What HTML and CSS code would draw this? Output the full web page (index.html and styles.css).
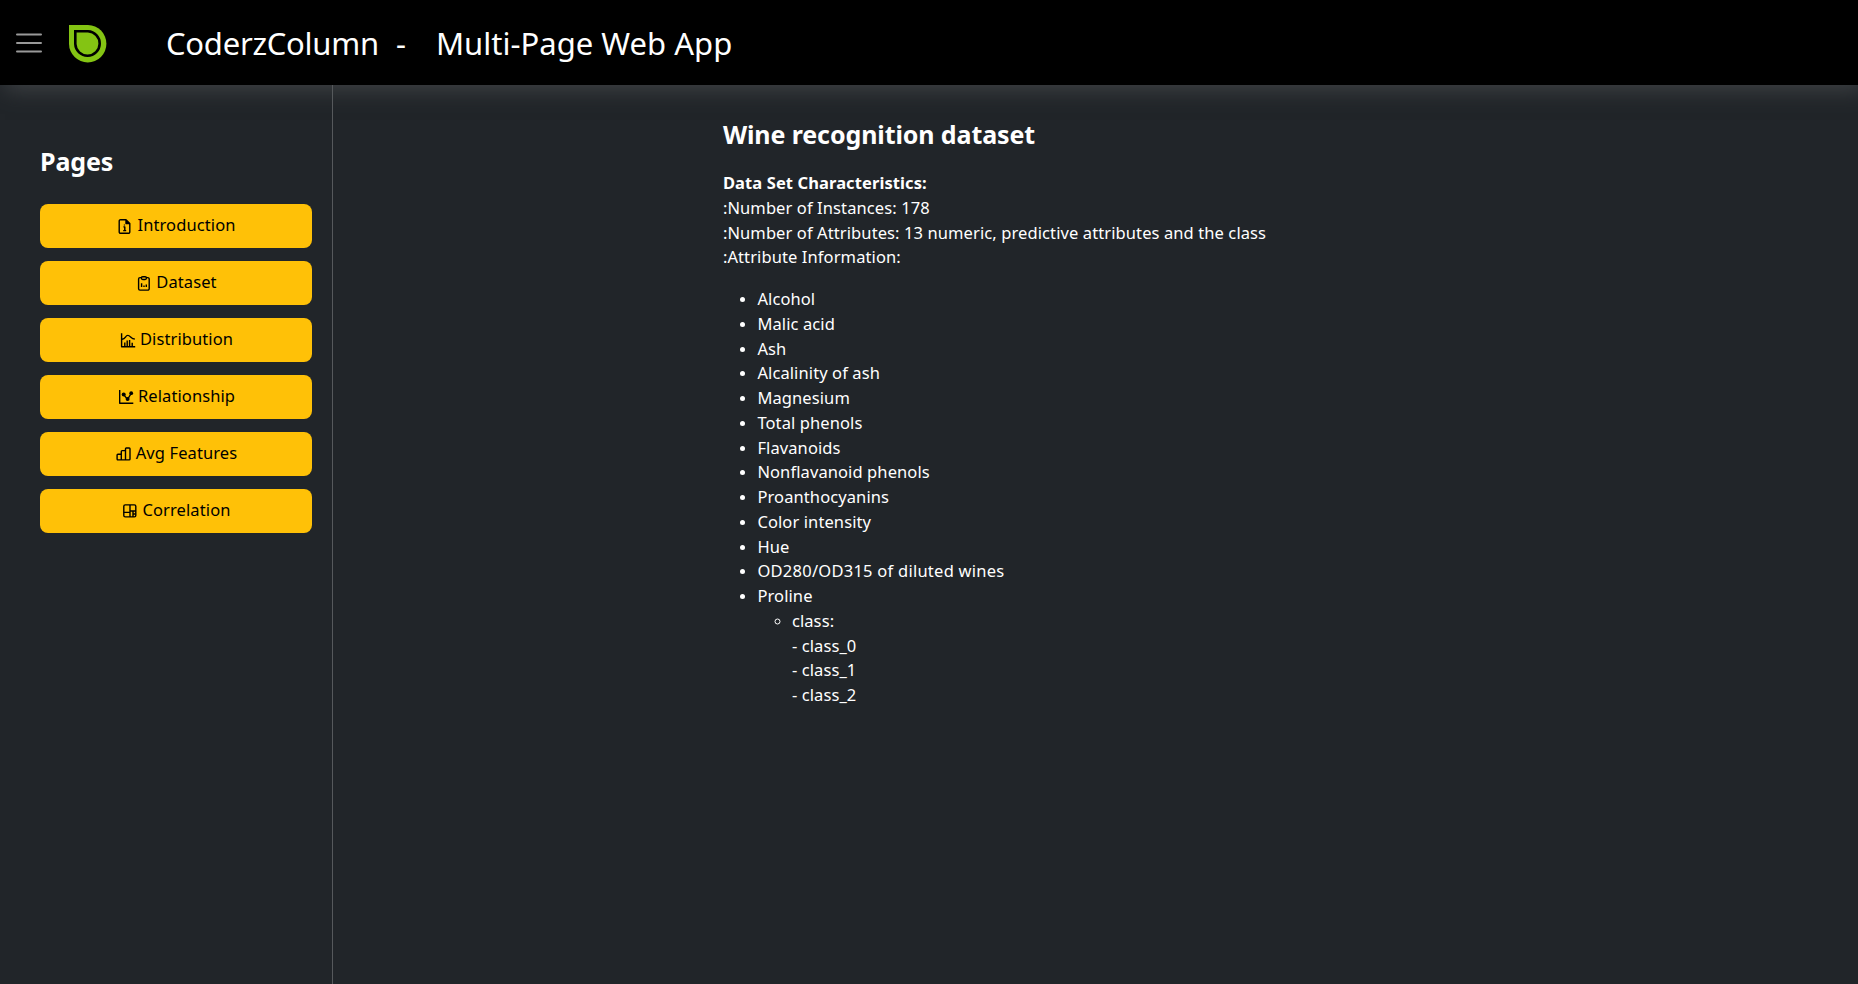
FILE: index.html
```
<!DOCTYPE html>
<html lang="en">
<head>
<meta charset="utf-8">
<title>Multi-Page Web App</title>
<link rel="stylesheet" href="styles.css">
</head>
<body>
<header class="header">
  <svg class="menu" viewBox="0 0 26 20" width="26" height="20"><path d="M1 1.5h24M1 10h24M1 18.5h24"/></svg>
  <svg class="logo" viewBox="0 0 38 38" width="38" height="38">
    <path fill="#84c413" d="M0 0H19A18.7 18.7 0 1 1 0 19Z"/>
    <path fill="#84c413" stroke="#000" stroke-width="2.6" d="M6.3 6.3H19A12.2 12.2 0 1 1 6.3 19Z"/>
  </svg>
  <div class="title"><span class="brand">CoderzColumn</span><span class="dash">-</span><span>Multi-Page Web App</span></div>
</header>
<div class="layout">
  <nav class="sidebar">
    <h2 class="heading">Pages</h2>
    <div class="buttons">
      <button class="btn"><svg class="icon" viewBox="0 0 17 17"><path d="M10 1.7H4.6a1.4 1.4 0 0 0-1.4 1.4v10.8a1.4 1.4 0 0 0 1.4 1.4h7.8a1.4 1.4 0 0 0 1.4-1.4V5.5L10 1.7v3.8h3.8M7.4 8.9h1.4v3.7M7.2 12.6h3"/><path class="solid" d="M10 1.7v3.8h3.8zM7.8 6.4h1.3v1.2H7.8z"/></svg>Introduction</button>
      <button class="btn"><svg class="icon" viewBox="0 0 17 17"><path d="M6.4 2.6H5a1.4 1.4 0 0 0-1.4 1.4v9.7a1.4 1.4 0 0 0 1.4 1.4h7.8a1.4 1.4 0 0 0 1.4-1.4V4a1.4 1.4 0 0 0-1.4-1.4h-1.4M7.7 1.7h2.4a1.2 1.2 0 0 1 0 2.8H7.7a1.2 1.2 0 0 1 0-2.8ZM6.6 8.2V12M9 10.4V12M11.3 9.4V12"/></svg>Dataset</button>
      <button class="btn"><svg class="icon" viewBox="0 0 17 17"><path d="M2.6 1.2v13.6h13.6M3.2 7.2c3.5 0 3-3.8 5.6-3.8S12 7 15.8 7M5.8 10.4v4M8.2 8.6v6M10.6 8v6.4M13.2 10.8v3.6"/></svg>Distribution</button>
      <button class="btn"><svg class="icon" viewBox="0 0 17 17"><path d="M2.7 1v13.2h13.6M6.7 5.6l3.8 4.8 4-6.4"/><circle class="solid" cx="6.7" cy="5.5" r="2"/><circle class="solid" cx="10.6" cy="10" r="2"/><circle class="solid" cx="14.2" cy="4.2" r="1.9"/></svg>Relationship</button>
      <button class="btn"><svg class="icon" viewBox="0 0 17 17"><path d="M2.9 8.2h3.4v5.7H2.9a.8.8 0 0 1-.8-.8V9a.8.8 0 0 1 .8-.8ZM6.3 13.9V5.4a.8.8 0 0 1 .8-.8h3.4v9.3ZM10.5 13.9V2.8a.8.8 0 0 1 .8-.8h2.9a.8.8 0 0 1 .8.8v10.3a.8.8 0 0 1-.8.8Z"/></svg>Avg Features</button>
      <button class="btn"><svg class="icon" viewBox="0 0 17 17"><rect x="2.8" y="1.9" width="12" height="12" rx="1.4"/><path d="M9 1.9v12M2.8 9.4H9M9 8h5.8M12 8v6M12 11h2.8"/></svg>Correlation</button>
    </div>
  </nav>
  <main class="main">
    <article class="content">
      <h2 class="heading">Wine recognition dataset</h2>
      <p class="text"><strong>Data Set Characteristics:</strong><br>:Number of Instances: 178<br>:Number of Attributes: 13 numeric, predictive attributes and the class<br>:Attribute Information:</p>
      <ul class="list">
        <li>Alcohol</li>
        <li>Malic acid</li>
        <li>Ash</li>
        <li>Alcalinity of ash</li>
        <li>Magnesium</li>
        <li>Total phenols</li>
        <li>Flavanoids</li>
        <li>Nonflavanoid phenols</li>
        <li>Proanthocyanins</li>
        <li>Color intensity</li>
        <li>Hue</li>
        <li class="wide">OD280/OD315 of diluted wines</li>
        <li>Proline
          <ul class="list">
            <li>class:<br>- class_0<br>- class_1<br>- class_2</li>
          </ul>
        </li>
      </ul>
    </article>
  </main>
</div>
</body>
</html>
```
FILE: styles.css
```
* { box-sizing: border-box; }
body {
  margin: 0;
  height: 100vh;
  display: flex;
  flex-direction: column;
  overflow: hidden;
  background: #212529;
  color: #fff;
  font: 16.5px/24.75px "Noto Sans", sans-serif;
  letter-spacing: 0.1px;
}
.header {
  flex: none;
  height: 85px;
  display: flex;
  align-items: center;
  padding: 0 16px;
  background: #000;
  box-shadow: 5px 5px 20px #3e4144;
}
.menu { fill: none; stroke: #999; stroke-width: 2; stroke-linecap: round; }
.logo { margin: 2px 59px 0 27px; }
.title {
  display: flex;
  font-size: 31px;
  line-height: 40px;
  letter-spacing: 0.02px;
  white-space: pre;
}
.brand { letter-spacing: -0.25px; }
.dash { margin: 0 30px 0 17px; }
.layout { flex: 1; display: flex; min-height: 0; }
.sidebar {
  flex: none;
  width: 333px;
  padding: 61px 20px 0 40px;
  border-right: 1px solid #56595c;
}
.heading {
  margin: 0;
  font-size: 25px;
  line-height: 30px;
  font-weight: 700;
  letter-spacing: -0.1px;
}
.buttons { display: grid; gap: 13.08px; margin-top: 28px; }
.btn {
  height: 44px;
  display: flex;
  justify-content: center;
  align-items: flex-start;
  gap: 4px;
  padding: 9px 0 0;
  border: 0;
  border-radius: 8px;
  background: #ffc107;
  color: #000;
  font: inherit;
  letter-spacing: inherit;
}
.icon {
  width: 17px;
  height: 17px;
  margin-top: 4.5px;
  fill: none;
  stroke: #000;
  stroke-width: 1.4;
  stroke-linejoin: round;
}
.solid { fill: #000; stroke: none; }
.main { flex: 1; display: flex; justify-content: center; padding-right: 202px; }
.content { padding-top: 34px; white-space: nowrap; }
.text { margin: 22px 0 17px; }
.list { margin: 0; padding-left: 34.5px; }
.list li::marker { font-size: 14px; }
.wide { letter-spacing: 0.25px; }
```
